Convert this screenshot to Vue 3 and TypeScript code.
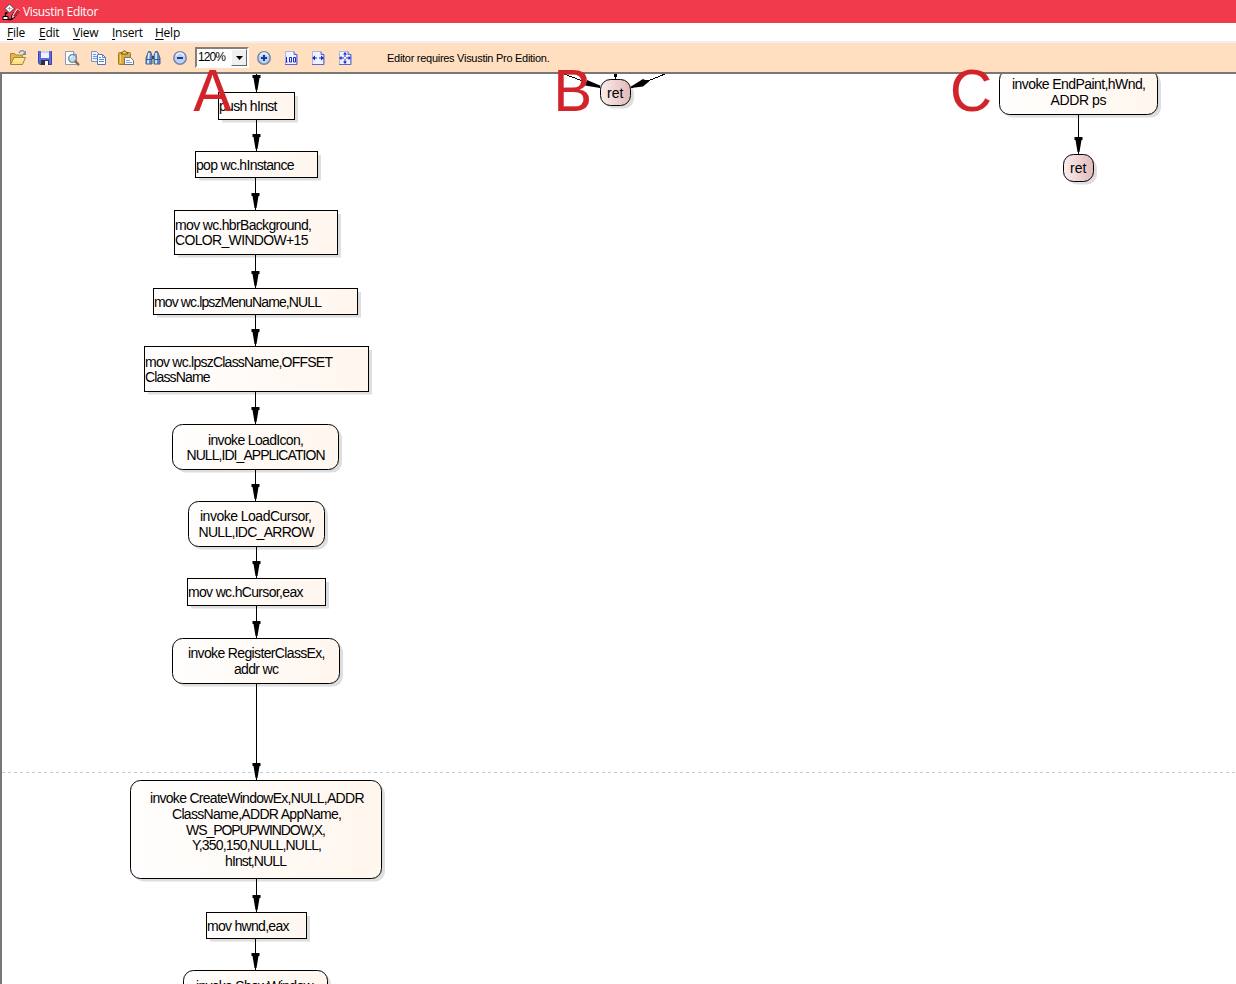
<script setup lang="ts">
interface Line { t: string; x: number; y: number; w: number }
interface Node { x: number; y: number; r: number; b: number; kind: 'box' | 'call' | 'end'; lines: Line[] }
interface Edge { x: number; from: number; to: number }

const L = (t: string, x: number, end: number, y: number): Line => ({ t, x, y, w: end - x })

const menus: string[] = ['File', 'Edit', 'View', 'Insert', 'Help']

const nodes: Node[] = [
  { x: 218, y: 92, r: 294, b: 119, kind: 'box', lines: [L('push hInst', 219, 277.5, 111)] },
  { x: 195, y: 151, r: 317, b: 177, kind: 'box', lines: [L('pop wc.hInstance', 196, 294.5, 170)] },
  { x: 174, y: 210, r: 337, b: 254, kind: 'box', lines: [L('mov wc.hbrBackground,', 175, 312, 230), L('COLOR_WINDOW+15', 175, 308.5, 245)] },
  { x: 153, y: 288, r: 357, b: 314, kind: 'box', lines: [L('mov wc.lpszMenuName,NULL', 154, 322, 307)] },
  { x: 144, y: 346, r: 368, b: 391, kind: 'box', lines: [L('mov wc.lpszClassName,OFFSET', 145, 333, 367), L('ClassName', 145, 210.5, 382)] },
  { x: 172, y: 424, r: 338, b: 469, kind: 'call', lines: [L('invoke LoadIcon,', 208, 304, 445), L('NULL,IDI_APPLICATION', 186.5, 325.5, 460)] },
  { x: 188, y: 501, r: 324, b: 546, kind: 'call', lines: [L('invoke LoadCursor,', 200, 312, 521), L('NULL,IDC_ARROW', 198.5, 314.5, 537)] },
  { x: 187, y: 578, r: 325, b: 605, kind: 'box', lines: [L('mov wc.hCursor,eax', 188, 303.5, 597)] },
  { x: 172, y: 638, r: 339, b: 683, kind: 'call', lines: [L('invoke RegisterClassEx,', 188, 325.5, 658), L('addr wc', 234, 279, 674)] },
  { x: 130, y: 780, r: 381, b: 878, kind: 'call', lines: [
    L('invoke CreateWindowEx,NULL,ADDR', 150, 364.5, 803),
    L('ClassName,ADDR AppName,', 172, 342, 819),
    L('WS_POPUPWINDOW,X,', 186, 326, 835),
    L('Y,350,150,NULL,NULL,', 192, 322, 850),
    L('hInst,NULL', 225, 287, 866)
  ] },
  { x: 206, y: 912, r: 306, b: 938, kind: 'box', lines: [L('mov hwnd,eax', 207, 289.5, 931)] },
  { x: 183, y: 970, r: 327, b: 1015, kind: 'call', lines: [L('invoke ShowWindow,', 196, 316, 991)] },
  { x: 600, y: 79, r: 630, b: 105, kind: 'end', lines: [L('ret', 607, 623.5, 98)] },
  { x: 999, y: 69, r: 1157, b: 114, kind: 'call', lines: [L('invoke EndPaint,hWnd,', 1012, 1146, 89), L('ADDR ps', 1050.5, 1106.5, 105)] },
  { x: 1063, y: 154, r: 1093, b: 181, kind: 'end', lines: [L('ret', 1070, 1086.5, 173)] }
]

const edges: Edge[] = [
  { x: 256, from: 60, to: 92 }, { x: 256, from: 120, to: 151 }, { x: 255, from: 178, to: 210 },
  { x: 255, from: 255, to: 288 }, { x: 255, from: 315, to: 346 }, { x: 255, from: 392, to: 424 },
  { x: 255, from: 470, to: 501 }, { x: 256, from: 547, to: 578 }, { x: 256, from: 606, to: 638 },
  { x: 256, from: 684, to: 780 }, { x: 256, from: 879, to: 912 }, { x: 255, from: 939, to: 970 },
  { x: 1078, from: 115, to: 154 }
]

const marks = [
  { t: 'A', x: 193.5, w: 38 }, { t: 'B', x: 553.5, w: 38.5 }, { t: 'C', x: 950, w: 42 }
]

const radius = (n: Node): number => (n.kind === 'box' ? 0 : 10)
const head = (e: Edge): string => `M${e.x - 3.5} ${e.to - 17}h8v3h-1l-2 12h-.5v2h-1v-2h-.500l-2 -12h-1z`
</script>

<template>
  <div class="window">
    <header class="title">
      <svg class="logo" width="18" height="18" viewBox="0 0 18 18">
        <path d="M7.500 1l4.500 4.500-4.500 4.500-4.500-4.500z" fill="#fff" stroke="#222" stroke-width=".8" />
        <path d="M5.500 5.500h4M7.500 3.500v4" stroke="#aaa" />
        <path d="M1 13.500h5v3H1z" fill="#fff" stroke="#000" />
        <path d="M3.500 13v-3h2M6 16.500h3l2-1" fill="none" stroke="#000" stroke-width="1.300" />
        <path d="M12.500 9l-2.500 3-.500 4 3.500-2 1.500-2z" fill="#fff" stroke="#000" />
        <path d="M16.500 6.500L12 13" stroke="#fff" stroke-width="3.500" />
        <path d="M16.500 7l-4.500 6.500" stroke="#d81424" stroke-width="2.200" />
        <path d="M17.300 8.500l-4.300 6" stroke="#222" stroke-width=".8" />
      </svg>
      <span>Visustin Editor</span>
    </header>
    <nav class="menu">
      <span v-for="m in menus" :key="m" :class="['item', m.toLowerCase()]"><u>{{ m[0] }}</u>{{ m.slice(1) }}</span>
    </nav>
    <div class="toolbar">
      <svg class="icon" viewBox="0 0 18 18">
        <path d="M1.500 15V4.500h4l1.500 1.500h6.500v3" fill="#e3b44c" stroke="#a98538" />
        <path d="M1.500 15.500l3.500-7h11.500l-3 7z" fill="#ffdf80" stroke="#a98538" />
        <path d="M6 9.500h9M5 11.500h9" stroke="#fff1b8" />
        <path d="M10 4c1.500-3 4-3 5.500-1" fill="none" stroke="#6d8db0" stroke-width="1.300" />
        <path d="M17 1.500V6h-4z" fill="#6d8db0" />
      </svg>
      <svg class="icon" viewBox="0 0 18 18">
        <path d="M2 2h14v14H4l-2-2z" fill="#5c68dc" />
        <path d="M2.500 2.500v11.500l2 1.500h11v-13" fill="none" stroke="#3c45b0" />
        <path d="M5 2h8v7H5z" fill="#eef2ff" /><path d="M5 2h8v2H5z" fill="#c8d4f6" />
        <path d="M5 11h8v5H5z" fill="#30303c" /><path d="M9 12h3v4H9z" fill="#fff" />
      </svg>
      <svg class="icon" viewBox="0 0 18 18">
        <path d="M2.500 2.500h8l3 3v10h-11z" fill="#fff" stroke="#8b9ab8" />
        <path d="M10.500 2.500v3h3" fill="#dbe4f5" stroke="#8b9ab8" />
        <circle cx="9.500" cy="9.500" r="3.800" fill="#b9e1f3" stroke="#73869d" stroke-width="1.300" />
        <path d="M7.500 9q0-2 2-2" stroke="#fff" fill="none" />
        <path d="M12.500 12.500l2.800 2.800" stroke="#8a6a50" stroke-width="2.500" stroke-linecap="round" />
      </svg>
      <svg class="icon" viewBox="0 0 18 18">
        <path d="M1.500 2.500h5l3 3v7h-8z" fill="#e8f1ff" stroke="#7b96c8" />
        <path d="M3 5.500h3M3 7.500h4M3 9.500h4" stroke="#719bdc" />
        <path d="M7.500 5.500h5l3 3v7h-8z" fill="#fff" stroke="#5476b8" />
        <path d="M12.500 5.500v3h3M9 8.500h2M9 10.500h5M9 12.500h5" fill="none" stroke="#4f83d3" />
      </svg>
      <svg class="icon" viewBox="0 0 18 18">
        <rect x="1.500" y="3.500" width="12" height="12" rx="1" fill="#dca93a" stroke="#a07a2c" />
        <path d="M3.500 6v8" stroke="#f7d772" /><path d="M4.500 5V3.500h1l1-1.500h2l1 1.500h1V5z" fill="#f2d26b" stroke="#75581c" />
        <path d="M7.500 8.500h6l3 3v4h-9z" fill="#fafcff" stroke="#5e718e" />
        <path d="M9 11.500h4M9 13.500h6" stroke="#8ba2c6" />
      </svg>
      <svg class="icon" viewBox="0 0 18 18">
        <path d="M4.500 2.500h2l1.500 4v8.500H2V9z" fill="#6688bd" stroke="#41608f" />
        <path d="M11.500 2.500h2l2.500 6.500v6h-6V6.500z" fill="#6688bd" stroke="#41608f" />
        <path d="M8 7h2v3H8z" fill="#28487e" />
        <path d="M5 4l-1 10.500M12 4v10.500" stroke="#e4efff" stroke-width="1.700" />
        <path d="M2 10.500h6M10 10.500h6" stroke="#3a5a8c" />
      </svg>
      <svg class="icon" viewBox="0 0 18 18">
        <circle cx="9" cy="9" r="6.200" fill="#bcd2f4" stroke="#7585ad" stroke-width="1.500" />
        <path d="M5 7q1-3 4-3t4 3" fill="none" stroke="#e8f2ff" stroke-width="1.400" />
        <path d="M6 9h6" stroke="#173d8c" stroke-width="2" />
      </svg>
      <div class="combo"><span>120%</span><b><svg width="7" height="4"><path d="M0 0h7L3.500 4z" /></svg></b></div>
      <svg class="icon" viewBox="0 0 18 18">
        <circle cx="9" cy="9" r="6.200" fill="#bcd2f4" stroke="#7585ad" stroke-width="1.500" />
        <path d="M5 7q1-3 4-3t4 3" fill="none" stroke="#e8f2ff" stroke-width="1.400" />
        <path d="M6 9h6M9 6v6" stroke="#173d8c" stroke-width="2" />
      </svg>
      <svg class="icon" viewBox="0 0 18 18">
        <path d="M3.500 2.500h8l3 3v10h-11z" fill="#edf3ff" stroke="#a8b5e0" /><path d="M3 15.500h12V5.500h-3v-3" fill="none" stroke="#5b66cd" />
        <path d="M4.500 8v5M3.500 13h2M7.500 8.500h2v4.500h-2zM11.500 8.500h2v4.500h-2z" fill="none" stroke="#2525d0" />
      </svg>
      <svg class="icon" viewBox="0 0 18 18">
        <path d="M3.500 2.500h8l3 3v10h-11z" fill="#edf3ff" stroke="#a8b5e0" /><path d="M3 15.500h12V5.500h-3v-3" fill="none" stroke="#5b66cd" />
        <path d="M4 9h4M10 9h4" stroke="#2525d0" /><path d="M6 6.500v5L3 9zM12 6.500v5L15 9z" fill="#2525d0" />
      </svg>
      <svg class="icon" viewBox="0 0 18 18">
        <path d="M3.500 2.500h8l3 3v10h-11z" fill="#edf3ff" stroke="#a8b5e0" /><path d="M3 15.500h12V5.500h-3v-3" fill="none" stroke="#5b66cd" />
        <path d="M4 9h4M10 9h4M9 4v4M9 10v4" stroke="#2525d0" />
        <path d="M5.500 7v4l-2.500-2zM12.500 7v4l2.500-2zM7 5.500h4L9 3zM7 12.500h4L9 15z" fill="#2525d0" />
      </svg>
      <span class="notice">Editor requires Visustin Pro Edition.</span>
    </div>
    <main class="canvas">
      <svg class="chart" width="1234" height="910" viewBox="2 74 1234 910">
        <defs>
          <linearGradient id="cream"><stop offset="0" stop-color="#fffefd" /><stop offset="1" stop-color="#fff6ee" /></linearGradient>
          <linearGradient id="rose"><stop offset="0" stop-color="#faeded" /><stop offset="1" stop-color="#e3b9b9" /></linearGradient>
        </defs>
        <path class="page" d="M2 772.500H1236" />
        <g v-for="(n, i) in nodes" :key="i">
          <rect class="shadow" :x="n.x + 4" :y="n.y + 4" :width="n.r - n.x" :height="n.b - n.y - 0.5" :rx="radius(n)" />
          <rect :class="['node', n.kind]" :x="n.x + 0.5" :y="n.y + 0.5" :width="n.r - n.x" :height="n.b - n.y" :rx="radius(n)" />
          <text v-for="l in n.lines" :key="l.t" :x="l.x" :y="l.y" :textLength="l.w">{{ l.t }}</text>
        </g>
        <g v-for="(e, i) in edges" :key="'e' + i">
          <path class="wire" :d="`M${e.x + 0.5} ${e.from}V${e.to}`" />
          <path :d="head(e)" />
        </g>
        <path class="wire" d="M564 74L600 87.500M665 74L631 88M615.500 74v5" />
        <path d="M587 80l13 5.500v2.500l-15-2.500zM643 79l-12 7.500v1.500l12-1.500 6-5v-1.500h-4zM614 74h3v3h-3z" />
      </svg>
      <svg class="marks" width="1234" height="90" viewBox="2 50 1234 90">
        <text v-for="m in marks" :key="m.t" :x="m.x" y="111" :textLength="m.w" lengthAdjust="spacingAndGlyphs">{{ m.t }}</text>
      </svg>
    </main>
  </div>
</template>

<style>
body { overflow: hidden; background: #fff; }
</style>

<style scoped>
.window { width: 1236px; height: 984px; display: flex; flex-direction: column; background: #fff; font-family: "Open Sans", "Noto Sans", sans-serif; font-size: 12px; color: #000; overflow: hidden; }
.title { height: 23px; flex: none; box-sizing: border-box; display: flex; align-items: center; padding-left: 2px; gap: 3px; background: #f13b4c; color: #fff; letter-spacing: -0.35px; white-space: nowrap; }
.menu { height: 18px; flex: none; display: flex; align-items: center; padding-left: 7px; border-bottom: 2px solid #f0f0f0; line-height: 18px; letter-spacing: -0.25px; }
.item { box-sizing: border-box; padding-top: 2px; white-space: nowrap; }
.item u { text-underline-offset: 2px; }
.file { width: 32px; }
.edit { width: 34px; }
.view { width: 39px; }
.insert { width: 43px; }
.toolbar { height: 29px; flex: none; display: flex; align-items: center; padding-left: 9px; background: #ffdfbf; }
.icon { width: 18px; height: 18px; margin-right: 9px; flex: none; }
.combo { box-sizing: border-box; width: 54px; height: 21px; margin: 0 6px 0 -3px; flex: none; display: flex; border: 2px solid; border-color: #808080 #fff #fff #808080; background: #fff; font: 12px/16px "Liberation Sans", Arial, sans-serif; letter-spacing: -0.9px; }
.combo span { width: 34px; padding-left: 1px; box-sizing: border-box; }
.combo b { box-sizing: border-box; width: 16px; height: 17px; display: flex; align-items: center; justify-content: center; background: #f0f0f0; border: 1px solid; border-color: #fff #696969 #696969 #fff; }
.notice { margin-left: 24px; font: 11px/14px "Liberation Sans", Arial, sans-serif; letter-spacing: -0.28px; white-space: nowrap; }
.canvas { position: relative; flex: 1; min-height: 0; box-sizing: border-box; border-left: 2px solid #777; border-top: 2px solid #777; background: #fff; }
.chart { display: block; font: 14px "Liberation Sans", Arial, sans-serif; }
.page { stroke: #c8c8c8; stroke-dasharray: 3 3; }
.shadow { fill: #dedede; }
.node { fill: url(#cream); stroke: #000; }
.node.end { fill: url(#rose); }
.wire { stroke: #000; fill: none; shape-rendering: crispEdges; }
.marks { position: absolute; left: 0; top: -24px; font: 59px "Liberation Sans", Arial, sans-serif; fill: #d2232a; stroke: #d2232a; stroke-width: 0.2; }
</style>
